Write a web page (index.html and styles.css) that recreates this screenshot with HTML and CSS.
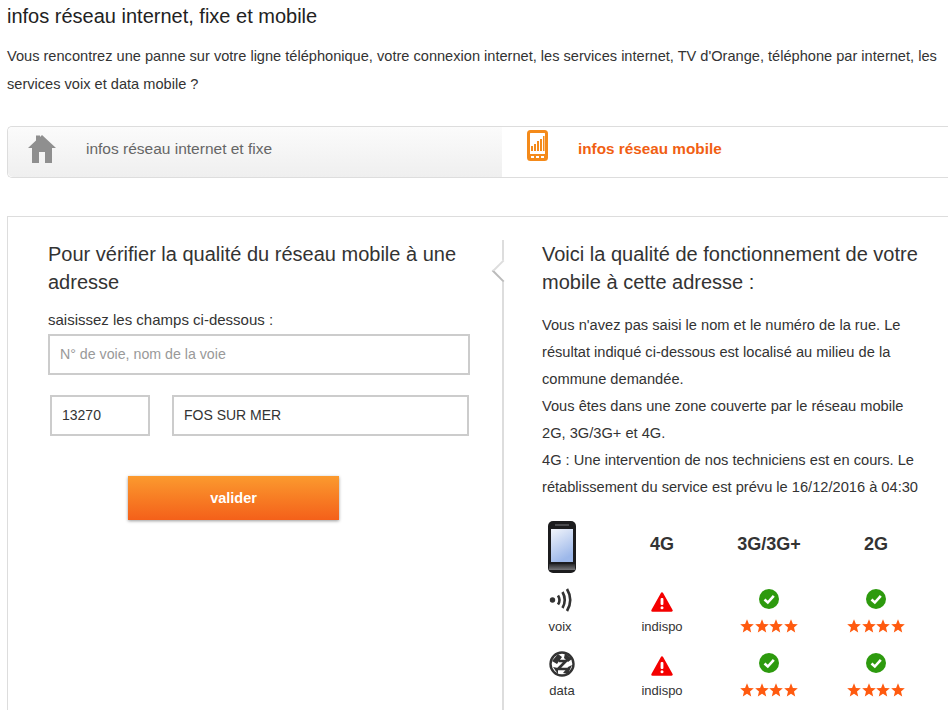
FILE: index.html
```html
<!DOCTYPE html>
<html lang="fr">
<head>
    <meta charset="UTF-8">
    <meta name="viewport" content="width=device-width, initial-scale=1.0">
    <title>infos réseau</title>

    <link rel="stylesheet" href="styles.css">
</head>
<body>
    <svg class="sprites" width="0" height="0">
        <symbol id="star" viewBox="0 0 14 14">
            <polygon points="7,0.3 8.9,4.9 13.8,5.3 10,8.5 11.2,13.4 7,10.8 2.8,13.4 4,8.5 0.2,5.3 5.1,4.9" fill="#ff5a0f"/>
        </symbol>
        <symbol id="warn" viewBox="0 0 22 20">
            <path d="M11 1.500 L20.500 18.500 H1.500 Z" fill="#f40000" stroke="#f40000" stroke-width="2.500" stroke-linejoin="round"/>
            <rect x="9.600" y="6" width="2.800" height="7" rx="1" fill="#fff"/>
            <circle cx="11" cy="15.800" r="1.500" fill="#fff"/>
        </symbol>
        <symbol id="ok" viewBox="0 0 20 20">
            <circle cx="10" cy="10" r="10" fill="#2d9a0e"/>
            <path d="M5.500 10.500 L8.800 13.500 L14.800 6.800" fill="none" stroke="#fff" stroke-width="2.600"/>
        </symbol>
    </svg>

    <h1 class="page-title">infos réseau internet, fixe et mobile</h1>
    <p class="intro">Vous rencontrez une panne sur votre ligne téléphonique, votre connexion internet, les services internet, TV d'Orange, téléphone par internet, les services voix et data mobile ?</p>

    <div class="tabs">
        <div class="tab">
            <svg class="tab-home" width="28" height="29" viewBox="0 0 28 29">
                <path d="M14 1 L28 14 H24 V29 H17 V18 H11 V29 H4 V14 H0 L8 6.500 V1.500 H12 V3 Z" fill="#8f8f8f"/>
            </svg>
            <span>infos réseau internet et fixe</span>
        </div>
        <div class="tab tab-active">
            <svg class="tab-phone" width="21" height="31" viewBox="0 0 21 31">
                <rect x="1.500" y="1.500" width="18" height="28" rx="2" fill="#fff" stroke="#f48a1a" stroke-width="3"/>
                <rect x="1" y="24" width="19" height="6" fill="#f48a1a"/>
                <rect x="4" y="26" width="3" height="2" fill="#fff"/>
                <rect x="9" y="26" width="3" height="2" fill="#fff"/>
                <rect x="14" y="26" width="3" height="2" fill="#fff"/>
                <path d="M4 16h2v5H4zM7 14h2v7H7zM10 11h2v10h-2zM13 9h2v12h-2zM16 6h1.500v15H16z" fill="#f48a1a"/>
            </svg>
            <span>infos réseau mobile</span>
        </div>
    </div>

    <div class="panel">
        <div class="panel-left">
            <h2>Pour vérifier la qualité du réseau mobile à une adresse</h2>
            <label class="field-label" for="street">saisissez les champs ci-dessous :</label>
            <input class="field field-street" type="text" id="street" placeholder="N° de voie, nom de la voie">
            <div class="field-row">
                <input class="field field-zip" type="text" value="13270">
                <input class="field field-city" type="text" value="FOS SUR MER">
            </div>
            <button class="submit" type="button">valider</button>
        </div>

        <div class="panel-right">
            <h2>Voici la qualité de fonctionnement de votre mobile à cette adresse :</h2>
            <p class="result">Vous n'avez pas saisi le nom et le numéro de la rue. Le résultat indiqué ci-dessous est localisé au milieu de la commune demandée.<br>
            Vous êtes dans une zone couverte par le réseau mobile 2G, 3G/3G+ et 4G.<br>
            4G : Une intervention de nos techniciens est en cours. Le rétablissement du service est prévu le 16/12/2016 à 04:30</p>

            <div class="quality">
                <div class="cell head">
                    <svg width="28" height="52" viewBox="0 0 28 52">
                        <defs>
                            <linearGradient id="screen" x1="0" y1="0" x2="0.4" y2="1">
                                <stop offset="0" stop-color="#f2f5fb"/>
                                <stop offset="1" stop-color="#9db8ea"/>
                            </linearGradient>
                            <linearGradient id="band" x1="0" y1="0" x2="0" y2="1">
                                <stop offset="0" stop-color="#2a2a2c"/>
                                <stop offset="1" stop-color="#77777a"/>
                            </linearGradient>
                        </defs>
                        <rect x="0" y="0" width="28" height="52" rx="5" fill="#1c1c1e"/>
                        <rect x="3" y="8" width="22" height="33" fill="url(#screen)"/>
                        <rect x="1" y="43" width="26" height="6" fill="url(#band)"/>
                        <rect x="7" y="3" width="14" height="2" fill="#4a4a4d"/>
                    </svg>
                </div>
                <div class="cell head">4G</div>
                <div class="cell head">3G/3G+</div>
                <div class="cell head">2G</div>

                <div class="cell">
                    <svg class="line-icon line-voix" width="24" height="24" viewBox="0 0 24 24" fill="none" stroke="#333" stroke-width="2.600">
                        <circle cx="3.500" cy="12" r="2.700" fill="#333" stroke="none"/>
                        <path d="M9 7.500 Q12 12 9 16.500"/>
                        <path d="M13.500 4 Q18 12 13.500 20"/>
                        <path d="M18 1 Q24.500 12 18 23"/>
                    </svg>
                    <span class="label-voix">voix</span>
                </div>
                <div class="cell"><svg class="warn" width="22" height="20"><use href="#warn"/></svg><span>indispo</span></div>
                <div class="cell"><svg class="ok" width="20" height="20"><use href="#ok"/></svg><div class="stars"><svg width="14" height="14"><use href="#star"/></svg><svg width="14" height="14"><use href="#star"/></svg><svg width="14" height="14"><use href="#star"/></svg><svg width="14" height="14"><use href="#star"/></svg></div></div>
                <div class="cell"><svg class="ok" width="20" height="20"><use href="#ok"/></svg><div class="stars"><svg width="14" height="14"><use href="#star"/></svg><svg width="14" height="14"><use href="#star"/></svg><svg width="14" height="14"><use href="#star"/></svg><svg width="14" height="14"><use href="#star"/></svg></div></div>

                <div class="cell">
                    <svg class="line-icon" width="26" height="26" viewBox="0 0 26 26">
                        <circle cx="13" cy="13" r="11.500" fill="#fff" stroke="#333" stroke-width="2.400"/>
                        <path d="M3 10 L9 3 L13 6 L8 13 Z M16 2 L23 8 L19 11 L15 7 Z M4 16 L9 17 L9 23 Z M23 14 L19 23 L14 22 L19 16 Z" fill="#333"/>
                        <path d="M10 10 H17 L9 18 H18" fill="none" stroke="#333" stroke-width="2.600"/>
                    </svg>
                    <span>data</span>
                </div>
                <div class="cell"><svg class="warn" width="22" height="20"><use href="#warn"/></svg><span>indispo</span></div>
                <div class="cell"><svg class="ok" width="20" height="20"><use href="#ok"/></svg><div class="stars"><svg width="14" height="14"><use href="#star"/></svg><svg width="14" height="14"><use href="#star"/></svg><svg width="14" height="14"><use href="#star"/></svg><svg width="14" height="14"><use href="#star"/></svg></div></div>
                <div class="cell"><svg class="ok" width="20" height="20"><use href="#ok"/></svg><div class="stars"><svg width="14" height="14"><use href="#star"/></svg><svg width="14" height="14"><use href="#star"/></svg><svg width="14" height="14"><use href="#star"/></svg><svg width="14" height="14"><use href="#star"/></svg></div></div>
            </div>
        </div>
    </div>
</body>
</html>
```

FILE: styles.css
```css
html, body {
    height: 710px;
    overflow: hidden;
}
body {
    font-family: "Liberation Sans", Arial, sans-serif;
    color: #333;
    background: #fff;
    margin: 0;
    padding-left: 7px;
    font-size: 14px;
}
.sprites { position: absolute; }

.page-title {
    font-size: 20px;
    font-weight: normal;
    line-height: 22px;
    margin: 0;
    padding-top: 5px;
    color: #222;
}
.intro {
    margin: 15px 0 0;
    font-size: 14.600px;
    line-height: 28px;
    color: #333;
    height: 56px;
}

.tabs {
    display: flex;
    margin-top: 28px;
    height: 50px;
    border: 1px solid #ddd;
    border-right: none;
    border-radius: 5px 0 0 5px;
}
.tab {
    display: flex;
    align-items: center;
    box-sizing: border-box;
    width: 494px;
    padding-bottom: 6px;
    background: linear-gradient(to bottom, #fbfbfb, #efefef);
    color: #666;
    font-size: 15.500px;
    border-radius: 5px 0 0 5px;
}
.tab-home {
    margin: -2px 30px 0 20px;
}
.tab-active {
    flex: 1;
    background: #fff;
    color: #f15f13;
    font-size: 15.300px;
    font-weight: bold;
    border-radius: 0;
}
.tab-phone {
    margin: -8px 30px 0 25px;
}

.panel {
    display: flex;
    margin-top: 38px;
    border: 1px solid #ddd;
    border-right: none;
    border-bottom: none;
    height: 500px;
}
.panel h2 {
    font-size: 20px;
    font-weight: normal;
    line-height: 28px;
    margin: 0;
    color: #333;
}
.panel-left {
    width: 454px;
    padding: 23px 0 0 40px;
}
.panel-right {
    position: relative;
    flex: 1;
    margin-top: 23px;
    border-left: 2px solid #ddd;
}
.panel-right::before {
    content: "";
    position: absolute;
    left: -9px;
    top: 23px;
    width: 16px;
    height: 16px;
    background: #fff;
    border-left: 2px solid #ddd;
    border-bottom: 2px solid #bbb;
    transform: rotate(45deg);
    box-sizing: border-box;
}
.panel-right h2,
.result {
    position: relative;
    margin-left: 38px;
}

.field-label {
    display: block;
    margin-top: 14px;
    font-size: 15px;
    line-height: 20px;
}
.field {
    display: block;
    box-sizing: border-box;
    height: 41px;
    border: 2px solid #ccc;
    padding: 0 10px 2px;
    font: 14px "Liberation Sans", Arial, sans-serif;
    color: #333;
    background: #fff;
    border-radius: 0;
}
.field::placeholder { color: #999; }
.field-street {
    width: 422px;
    margin-top: 4px;
    font-size: 14.200px;
}
.field-row {
    display: flex;
    gap: 22px;
    margin: 20px 0 0 2px;
}
.field-zip { width: 100px; }
.field-city { width: 297px; }
.submit {
    display: block;
    width: 211px;
    height: 44px;
    margin: 40px 0 0 80px;
    border: none;
    background: linear-gradient(to bottom, #fb9a2e, #f4601a);
    color: #fff;
    font: bold 14.500px "Liberation Sans", Arial, sans-serif;
    box-shadow: 0 1px 3px rgba(0, 0, 0, 0.4);
}

.result {
    margin-top: 16px;
    margin-bottom: 0;
    font-size: 14.650px;
    line-height: 27px;
    width: 380px;
}
.quality {
    display: grid;
    grid-template-columns: 93px 107px 107px 107px;
    grid-template-rows: 66px 64px 64px;
    margin: 20px 0 0 11.500px;
    justify-items: center;
    text-align: center;
    font-size: 13px;
}
.cell {
    width: 100px;
    display: flex;
    flex-direction: column;
    align-items: center;
}
.head {
    font-size: 18px;
    font-weight: bold;
    line-height: 46px;
    color: #333;
}
.line-icon { height: 26px; }
.line-voix { margin-right: 3px; }
.cell span {
    margin-top: 7px;
    line-height: 14px;
}
.cell .label-voix { margin-right: 4px; }
.warn { margin-top: 5px; }
.warn + span { margin-top: 8px; }
.ok { margin-top: 2px; }
.stars {
    display: flex;
    gap: 0.500px;
    margin-top: 10px;
}
```
